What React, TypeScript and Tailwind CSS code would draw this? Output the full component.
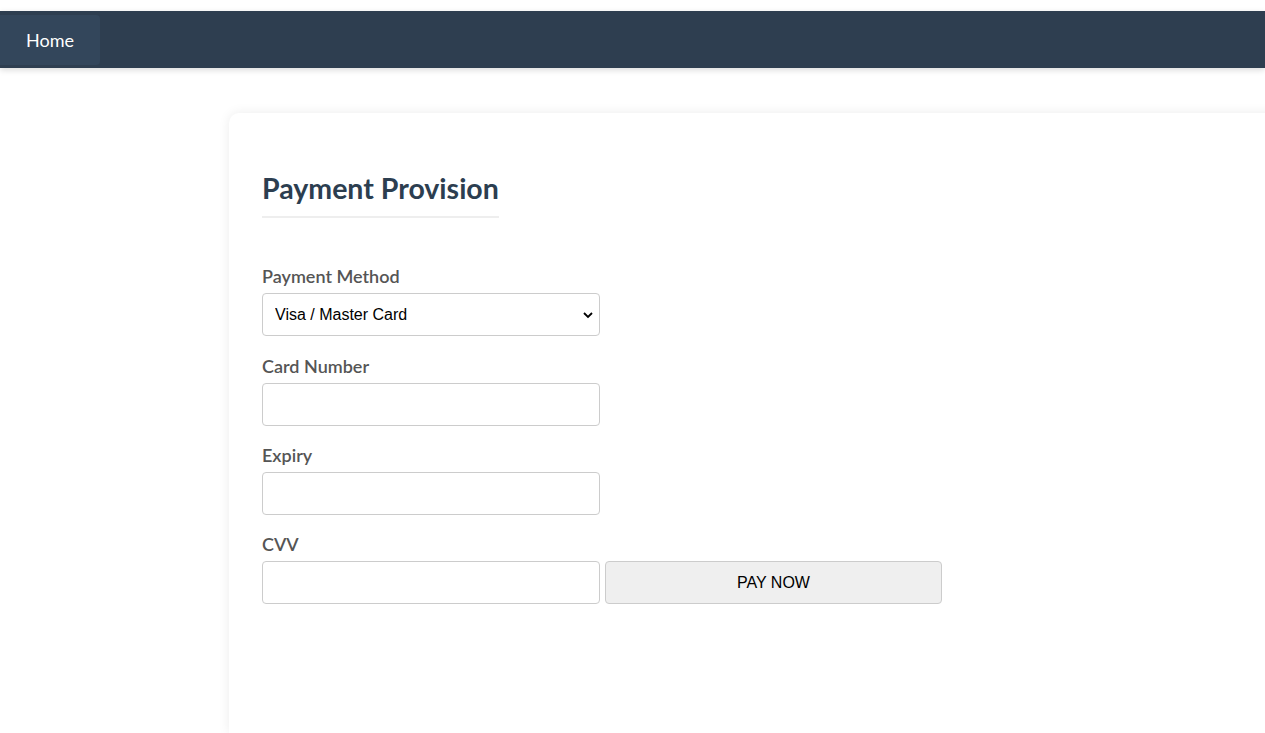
import React from "react";

const labelCls = "block text-[18px] font-semibold text-[#555] mb-[6px] leading-[22px]";
const inputCls = "block w-[338px] h-[43px] border border-[#ccc] rounded-[4px] bg-white px-3 text-[16px]";

export default function App() {
  return (
    <div className="h-[733px] bg-white overflow-hidden" style={{ fontFamily: "Lato, 'Noto Sans', sans-serif" }}>
      <div className="h-[11px]" />
      <nav className="h-[57px] bg-[#2e3e50] shadow-[0_2px_6px_rgba(0,0,0,0.15)] flex items-center">
        <a className="h-[50px] w-[100px] flex items-center justify-center bg-[#33465b] rounded-r-[4px] text-white text-[18px] pt-[2px]">
          Home
        </a>
      </nav>

      <div className="pt-[45px] pl-[229px]">
        <div className="w-[1100px] h-[620px] bg-white rounded-t-[10px] shadow-[0_0_12px_rgba(0,0,0,0.08)] pl-[33px] pt-[57px]">
          <h2 className="inline-block text-[28.5px] font-bold text-[#2c3e50] leading-[36px] pb-[10px] border-b-2 border-[#eee]">
            Payment Provision
          </h2>

          <form className="mt-[47px]" style={{ fontFamily: "'Liberation Sans', Arial, sans-serif" }}>
            <label className={labelCls} style={{ fontFamily: "Lato, sans-serif" }}>Payment Method</label>
            <div className="relative w-[338px]">
              <select className={inputCls + " appearance-none text-black"} defaultValue="visa">
                <option value="visa">Visa / Master Card</option>
              </select>
              <svg className="absolute right-[6px] top-[16px] pointer-events-none" width="12" height="12" viewBox="0 0 12 12">
                <path d="M2 4 L6 8 L10 4" fill="none" stroke="#000" strokeWidth="1.8" />
              </svg>
            </div>

            <label className={labelCls + " mt-[19px]"} style={{ fontFamily: "Lato, sans-serif" }}>Card Number</label>
            <input className={inputCls} />

            <label className={labelCls + " mt-[18px]"} style={{ fontFamily: "Lato, sans-serif" }}>Expiry</label>
            <input className={inputCls} />

            <label className={labelCls + " mt-[18px]"} style={{ fontFamily: "Lato, sans-serif" }}>CVV</label>
            <div className="flex gap-[5px]">
              <input className={inputCls} />
              <button type="button" className="w-[337px] h-[43px] bg-[#efefef] border border-[#ccc] rounded-[4px] text-[16px] text-black">
                PAY NOW
              </button>
            </div>
          </form>
        </div>
      </div>
    </div>
  );
}
